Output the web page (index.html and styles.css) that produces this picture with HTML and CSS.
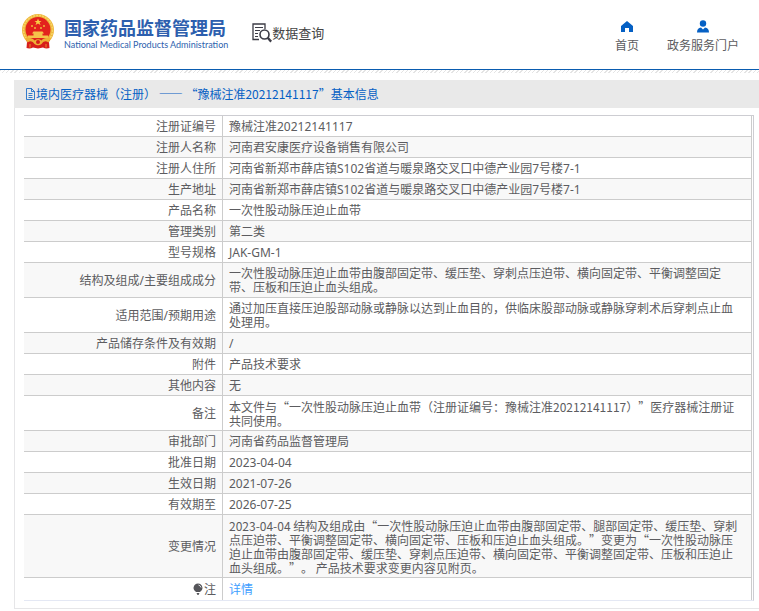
FILE: index.html
```html
<!DOCTYPE html>
<html lang="zh-CN">

<head>
    <meta charset="utf-8">
    <title>数据查询</title>
    <link rel="stylesheet" href="styles.css">
</head>

<body>
    <header class="header">
        <div class="brand">
            <svg class="emblem" viewBox="0 0 64 70" aria-hidden="true">
                <circle cx="32" cy="32" r="32" fill="#eeb63c" />
                <circle cx="32" cy="32" r="29" fill="none" stroke="#f8d668" stroke-width="3" stroke-dasharray="4 2" />
                <circle cx="32" cy="31" r="25" fill="#e3221d" />
                <path d="M32 9 l2 5 h5 l-4 3 2 5 -5-3 -5 3 2-5 -4-3 h5z" fill="#f9cf45" />
                <g fill="#f3b63b">
                    <circle cx="20" cy="24" r="2" />
                    <circle cx="26" cy="28" r="2" />
                    <circle cx="38" cy="28" r="2" />
                    <circle cx="44" cy="24" r="2" />
                </g>
                <path d="M23 35 h18 l3 4 h-3 v4 h11 v5 h-40 v-5 h11 v-4 h-3z" fill="#f5c34a" />
                <path d="M8 50 L56 50 L54 56 L55 68 Q48 70 42 67 L32 69 L22 67 Q16 70 9 68 L10 56Z" fill="#d71e1b" />
                <path d="M6 48 Q20 46 25 53 Q32 48 39 53 Q44 46 58 48 L53 57 Q44 51 39 60 Q32 65 25 60 Q20 51 11 57Z" fill="#edb036" />
                <circle cx="32" cy="56" r="4" fill="#d71e1b" />
                <path d="M16 60 v7 M48 60 v7" stroke="#e8912e" stroke-width="2" />
            </svg>
            <div>
                <div class="brand-name">国家药品监督管理局</div>
                <div class="brand-en">National Medical Products Administration</div>
            </div>
        </div>
        <div class="section">
            <svg class="section-icon" viewBox="0 0 20 20" fill="none" stroke="#3c3c46" aria-hidden="true">
                <path d="M7 16.5 H1 V1 H13 V6" stroke-width="1.3" />
                <path d="M3 4.5 H11 M3 7.5 H8 M3 10.5 H6 M3 13.5 H6" stroke-width="1.2" />
                <circle cx="12.5" cy="11.5" r="4.5" stroke-width="1.6" />
                <path d="M15.7 14.8 L19.2 18.6" stroke-width="2.4" />
            </svg>
            <span>数据查询</span>
        </div>
        <nav class="nav">
            <a href="#">
                <svg viewBox="0 0 14 14" aria-hidden="true">
                    <path d="M7 1 L13 6 V12 H9 V8 H5 V12 H1 V6 Z" fill="#0560c4" />
                </svg>
                首页
            </a>
            <a href="#">
                <svg viewBox="0 0 14 14" aria-hidden="true">
                    <circle cx="7" cy="3.5" r="3.2" fill="#0560c4" />
                    <path d="M1 12.5 Q1 8 5 7.5 L7 9.5 L9 7.5 Q13 8 13 12.5 Z" fill="#0560c4" />
                </svg>
                政务服务门户
            </a>
        </nav>
    </header>
    <div class="hatch"></div>

    <main class="panel">
        <h1 class="panel-title zh">
            <svg viewBox="0 0 11 12" fill="none" stroke="#0560c4" aria-hidden="true">
                <path d="M1.5 .5 H6.5 L9.5 3.5 V11.5 H1.5 Z M6.5 .5 V3.5 H9.5 M3.5 5.5 H7.5 M3.5 7.5 H7.5 M3.5 9.5 H7.5" stroke-width=".8" />
            </svg>
            <span>境内医疗器械（注册） —— “豫械注准20212141117”基本信息</span>
        </h1>
        <div class="table-wrap">
            <table class="info">
                <tr><th>注册证编号</th><td>豫械注准20212141117</td></tr>
                <tr><th>注册人名称</th><td>河南君安康医疗设备销售有限公司</td></tr>
                <tr><th>注册人住所</th><td>河南省新郑市薛店镇S102省道与暖泉路交叉口中德产业园7号楼7-1</td></tr>
                <tr><th>生产地址</th><td>河南省新郑市薛店镇S102省道与暖泉路交叉口中德产业园7号楼7-1</td></tr>
                <tr><th>产品名称</th><td>一次性股动脉压迫止血带</td></tr>
                <tr><th>管理类别</th><td>第二类</td></tr>
                <tr><th>型号规格</th><td>JAK-GM-1</td></tr>
                <tr><th>结构及组成/主要组成成分</th><td>一次性股动脉压迫止血带由腹部固定带、缓压垫、穿刺点压迫带、横向固定带、平衡调整固定带、压板和压迫止血头组成。</td></tr>
                <tr><th>适用范围/预期用途</th><td>通过加压直接压迫股部动脉或静脉以达到止血目的，供临床股部动脉或静脉穿刺术后穿刺点止血处理用。</td></tr>
                <tr><th>产品储存条件及有效期</th><td>/</td></tr>
                <tr><th>附件</th><td>产品技术要求</td></tr>
                <tr><th>其他内容</th><td>无</td></tr>
                <tr><th>备注</th><td class="zh">本文件与“一次性股动脉压迫止血带（注册证编号：豫械注准20212141117）”医疗器械注册证共同使用。</td></tr>
                <tr><th>审批部门</th><td>河南省药品监督管理局</td></tr>
                <tr><th>批准日期</th><td>2023-04-04</td></tr>
                <tr><th>生效日期</th><td>2021-07-26</td></tr>
                <tr><th>有效期至</th><td>2026-07-25</td></tr>
                <tr><th>变更情况</th><td class="zh">2023-04-04 结构及组成由“一次性股动脉压迫止血带由腹部固定带、腿部固定带、缓压垫、穿刺点压迫带、平衡调整固定带、横向固定带、压板和压迫止血头组成。”变更为“一次性股动脉压迫止血带由腹部固定带、缓压垫、穿刺点压迫带、横向固定带、平衡调整固定带、压板和压迫止血头组成。”。 产品技术要求变更内容见附页。</td></tr>
                <tr class="note">
                    <th>
                        <svg viewBox="0 0 10 12" aria-hidden="true">
                            <path d="M5 .5 A4.5 4.5 0 0 1 7 9 H3 A4.5 4.5 0 0 1 5 .5Z M3.5 10 H6.5 L5.5 12 H4.5Z" fill="#55555a" />
                            <path d="M5.5 2 Q7.5 2.5 8 4.5" fill="none" stroke="#fff" stroke-width=".8" />
                        </svg>注
                    </th>
                    <td><a href="#">详情</a></td>
                </tr>
            </table>
        </div>
    </main>
</body>

</html>
```

FILE: styles.css
```css
* {
    box-sizing: border-box;
}

body {
    margin: 0;
    background: #fff;
    color: #5c5c60;
    font-family: "Noto Sans", "Noto Sans CJK SC", sans-serif;
    font-size: 12px;
    line-height: 14px;
    text-spacing-trim: space-all;
}

a {
    color: #409eff;
    text-decoration: none;
}

/* text with full-width quotes */
.zh {
    font-family: "Noto Sans CJK SC", sans-serif;
}

.header {
    display: flex;
    align-items: flex-start;
    height: 70px;
    padding: 14px 20px 0 22px;
    border-bottom: 1px solid #0a5cb0;
}

.brand {
    display: flex;
    gap: 10px;
    color: #2d5fae;
}

.emblem {
    width: 32px;
    height: 35px;
}

.brand-name {
    padding-top: 3px;
    font-size: 18px;
    font-weight: bold;
    line-height: 22px;
    white-space: nowrap;
}

.brand-en {
    font-family: Lato, sans-serif;
    font-size: 9px;
    line-height: 12px;
    white-space: nowrap;
}

.section {
    display: flex;
    align-items: center;
    margin: 9px 0 0 24px;
    color: #444;
    font-size: 13px;
    line-height: 18px;
    white-space: nowrap;
}

.section-icon {
    width: 20px;
    height: 20px;
}

.nav {
    display: flex;
    gap: 28px;
    margin-left: auto;
    padding-top: 6px;
}

.nav a {
    display: flex;
    flex-direction: column;
    align-items: center;
    gap: 5px;
    color: #5c5c60;
    white-space: nowrap;
}

.nav svg {
    width: 14px;
    height: 14px;
}

.hatch {
    height: 3px;
    background: repeating-linear-gradient(135deg, #e4e4e4 0 1px, #fff 1px 3px);
}

.panel {
    margin: 7px 0 0 14px;
    padding-bottom: 7px;
    border-left: 1px solid #e6e6e8;
    border-bottom: 1px solid #e6e6e8;
}

.panel-title {
    display: flex;
    align-items: center;
    height: 28px;
    margin: 0 0 7px -1px;
    padding-left: 11px;
    background: #e9e9e9;
    color: #0560c4;
    font-size: 12px;
    font-weight: normal;
}

.panel-title svg {
    width: 11px;
    height: 12px;
}

.table-wrap {
    margin: 0 5px 0 9px;
    padding-right: 1px;
    border: solid #cdcdd2;
    border-width: 1px 1px 0 0;
    border-bottom: 1px solid #e4e8f4;
}

.info {
    width: 100%;
    border-spacing: 0;
}

.info th,
.info td {
    padding: 4px 6px 2px;
    border-right: 1px solid #ccc;
    border-bottom: 1px solid #ccc;
}

.info th {
    width: 199px;
    font-weight: normal;
    text-align: right;
}

.info td {
    padding-right: 8px;
    text-align: left;
}

.info tr:nth-child(even) {
    background: #f8f8f8;
}

.info .note {
    background: #fff;
}

.info .note th,
.info .note td {
    padding: 5px 6px 3px;
    border-bottom: 0;
}

.note svg {
    width: 10px;
    height: 12px;
    margin-right: 1px;
    vertical-align: -1px;
}
```
